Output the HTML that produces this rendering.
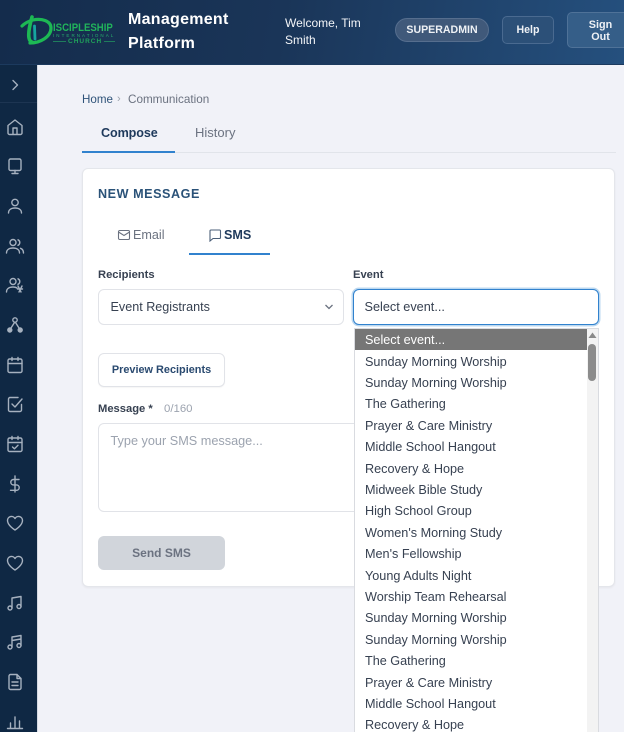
<!DOCTYPE html>
<html><head><meta charset="utf-8"><style>
*{box-sizing:border-box;margin:0;padding:0}
html,body{width:624px;height:732px;overflow:hidden}
body{position:relative;background:#f1f2f8;font-family:"Liberation Sans",sans-serif;color:#374151}
.a{position:absolute;white-space:nowrap}
#hd{left:0;top:0;width:624px;height:65px;background:linear-gradient(100deg,#142c4c 0%,#1a3558 45%,#25507e 100%);border-bottom:1px solid #1c3a5e}
#sb{left:0;top:65px;width:37px;height:667px;background:#0f2844;border-right:0}
#sbe{left:37px;top:65px;width:1px;height:667px;background:#d5dae3}
.ic{position:absolute;left:5px;width:20px;height:20px;fill:none;stroke:#a6b1bf;stroke-width:1.4;stroke-linecap:round;stroke-linejoin:round}
.o{left:365px;font-size:12.65px;color:#374151;line-height:21.4px;height:21.4px}
</style></head><body>
<div class="a" id="hd"></div>
<svg class="a" style="left:20px;top:15px;width:38px;height:32px" viewBox="0 0 38 32" fill="none" stroke-linecap="round"><path d="M2 11 C5 8 9 6 13 5 C22 3 31 6 31 13 C31 22 20 28 10 28" stroke="#1db954" stroke-width="3.2"/><path d="M12 2 C10 9 8 18 9 23 C9.500 26 11 27 13 27.500" stroke="#1db954" stroke-width="3.6"/><path d="M14.500 11 L15 24" stroke="#16a5a0" stroke-width="2.8"/></svg>
<div class="a" style="left:53px;top:22px;font-size:10.8px;font-weight:bold;color:#21b35b;transform:scaleX(.89);transform-origin:left">ISCIPLESHIP</div>
<div class="a" style="left:53px;top:32.500px;font-size:4.5px;color:#27ae6c;letter-spacing:2.05px">INTERNATIONAL</div>
<div class="a" style="left:53px;top:41px;width:62px;height:1px;background:#1f7d5c"></div>
<div class="a" style="left:66px;top:38px;font-size:6.5px;font-weight:bold;color:#1fa35c;letter-spacing:1px;background:#17304f;padding:0 2px">CHURCH</div>
<div class="a" style="left:128px;top:8px;font-size:16px;font-weight:bold;color:#fff;line-height:24px;letter-spacing:.28px">Management<br>Platform</div>
<div class="a" style="left:285px;top:15px;font-size:12px;color:#f3f5f8;line-height:17px">Welcome, Tim<br>Smith</div>
<div class="a" style="left:395px;top:18px;width:94px;height:24px;border-radius:12px;background:#40597a;border:1px solid #566e8e;color:#eef1f5;font-size:10.6px;font-weight:bold;text-align:center;line-height:23px">SUPERADMIN</div>
<div class="a" style="left:502px;top:16px;width:52px;height:28px;border-radius:5px;background:#2c5078;border:1px solid #4a6a90;color:#eef1f5;font-size:10.6px;font-weight:bold;text-align:center;line-height:27px">Help</div>
<div class="a" style="left:567px;top:12px;width:62px;height:36px;border-radius:5px;background:#355e88;border:1px solid #4f7298;color:#eef1f5;font-size:10.8px;font-weight:bold;text-align:center;line-height:12.5px;padding:5.500px 0 0 5px;white-space:normal">Sign<br>Out</div>

<div class="a" id="sb"><svg style="position:absolute;left:0;top:0;width:37px;height:667px" viewBox="0 0 37 667"><path d="M0 37.500H37" stroke="#1d3552"/></svg>
<svg class="ic" style="top:10px" viewBox="0 0 20 20"><path d="M8 5.500l4.500 4.500L8 14.500"/></svg>
<svg class="ic" style="top:52px" viewBox="0 0 20 20"><path d="M3 8.500L10 3l7 5.500V16a1.500 1.500 0 0 1-1.500 1.500h-11A1.500 1.500 0 0 1 3 16zM8 17.500V11h4v6.500"/></svg>
<svg class="ic" style="top:91px" viewBox="0 0 20 20"><rect x="4" y="3" width="12" height="11.500" rx="1.500"/><path d="M10 14.500V17M7 17.500h6"/></svg>
<svg class="ic" style="top:131px" viewBox="0 0 20 20"><circle cx="10" cy="6.500" r="3.200"/><path d="M3.500 17c0-3.500 3-5 6.500-5s6.500 1.500 6.500 5"/></svg>
<svg class="ic" style="top:171px" viewBox="0 0 20 20"><circle cx="8" cy="6.500" r="3"/><path d="M1.500 17c0-3.500 3-5 6.500-5s6.500 1.500 6.500 5M13 3.800a3 3 0 0 1 0 5.500M15.500 12.300c2 .7 3 2.500 3 4.700"/></svg>
<svg class="ic" style="top:210px" viewBox="0 0 20 20"><circle cx="8" cy="6.500" r="3"/><path d="M1.500 17c0-3.500 3-5 6.500-5 1.500 0 3 .3 4 1M13 3.800a3 3 0 0 1 0 5.500M13 11l3 6M17 11l-3 6M12.500 14h5"/></svg>
<svg class="ic" style="top:250px" viewBox="0 0 20 20"><circle cx="10" cy="5" r="2.200"/><circle cx="4.800" cy="15" r="2" fill="#a6b1bf"/><circle cx="15.200" cy="15" r="2" fill="#a6b1bf"/><path d="M9.500 7.500L6 13M10.500 7.500L14 13"/></svg>
<svg class="ic" style="top:290px" viewBox="0 0 20 20"><rect x="3" y="4" width="14" height="13.500" rx="1.500"/><path d="M3 8.500h14M7 2.500v3M13 2.500v3"/></svg>
<svg class="ic" style="top:329px" viewBox="0 0 20 20"><path d="M16.500 10.500V16a1.500 1.500 0 0 1-1.500 1.500H5A1.500 1.500 0 0 1 3.500 16V5A1.500 1.500 0 0 1 5 3.500h8M7 10l3 3 7-8"/></svg>
<svg class="ic" style="top:369px" viewBox="0 0 20 20"><rect x="3" y="4" width="14" height="13.500" rx="1.500"/><path d="M3 8.500h14M7 2.500v3M13 2.500v3M7.500 13l2 1.800 3.500-3.500"/></svg>
<svg class="ic" style="top:409px" viewBox="0 0 20 20"><path d="M10 2v16M14 5.500H8.500a2.700 2.700 0 0 0 0 5.400h3a2.700 2.700 0 0 1 0 5.400H5.500"/></svg>
<svg class="ic" style="top:448px" viewBox="0 0 20 20"><path d="M10 17S2.500 12.500 2.500 7.500A4 4 0 0 1 10 5.500 4 4 0 0 1 17.500 7.500C17.500 12.500 10 17 10 17z"/></svg>
<svg class="ic" style="top:488px" viewBox="0 0 20 20"><path d="M10 17S2.500 12.500 2.500 7.500A4 4 0 0 1 10 5.500 4 4 0 0 1 17.500 7.500C17.500 12.500 10 17 10 17z"/></svg>
<svg class="ic" style="top:528px" viewBox="0 0 20 20"><path d="M7 15V5l9-1.500V13.500"/><circle cx="5" cy="15" r="2"/><circle cx="14" cy="13.500" r="2"/></svg>
<svg class="ic" style="top:567px" viewBox="0 0 20 20"><path d="M7 15V5l9-1.500V13.500M7 8.500l9-1.500"/><circle cx="5" cy="15" r="2"/><circle cx="14" cy="13.500" r="2"/></svg>
<svg class="ic" style="top:607px" viewBox="0 0 20 20"><path d="M5.500 2.500H12l4 4V16a1.500 1.500 0 0 1-1.500 1.500h-9A1.500 1.500 0 0 1 4 16V4a1.500 1.500 0 0 1 1.500-1.500zM12 2.500v4h4M7 10h6M7 13.500h6"/></svg>
<svg class="ic" style="top:646px" viewBox="0 0 20 20"><path d="M2.500 17.500h15M5.500 17v-5M10 17V6M14.500 17v-7"/></svg>
</div>
<div class="a" id="sbe"></div>

<div class="a" style="left:82px;top:93px;font-size:11.6px;color:#2f5379">Home</div>
<div class="a" style="left:117px;top:93px;font-size:11px;color:#9aa1ac">›</div>
<div class="a" style="left:128px;top:93px;font-size:11.7px;color:#6b7280">Communication</div>
<div class="a" style="left:82px;top:152px;width:534px;height:1px;background:#e1e4ea"></div>
<div class="a" style="left:82px;top:151px;width:93px;height:2px;background:#3182ce"></div>
<div class="a" style="left:101px;top:125.500px;font-size:12.6px;font-weight:bold;color:#1f3a5c;letter-spacing:-.1px">Compose</div>
<div class="a" style="left:195px;top:125px;font-size:13px;color:#6b7280">History</div>

<div class="a" style="left:82px;top:168px;width:533px;height:419px;background:#fff;border:1px solid #e4e6eb;border-radius:6px;box-shadow:0 1px 2px rgba(0,0,0,.05)"></div>
<div class="a" style="left:98px;top:187px;font-size:12.6px;font-weight:bold;color:#2a5278;letter-spacing:.55px">NEW MESSAGE</div>
<svg class="a" style="left:117px;top:228px;width:14px;height:14px" viewBox="0 0 14 14" fill="none" stroke="#6b7280" stroke-width="1.100"><rect x="1.500" y="2.500" width="11" height="9" rx="1.200"/><path d="M1.500 4l5.500 3.500L12.500 4"/></svg>
<div class="a" style="left:133px;top:228px;font-size:12.6px;color:#6b7280">Email</div>
<svg class="a" style="left:208px;top:228px;width:14px;height:14px" viewBox="0 0 14 14" fill="none" stroke="#4b5f78" stroke-width="1.100"><path d="M2 3a1 1 0 0 1 1-1h8.500a1 1 0 0 1 1 1v6.500a1 1 0 0 1-1 1H5l-3 2.500z"/></svg>
<div class="a" style="left:224px;top:228px;font-size:12.6px;font-weight:bold;color:#1f3a5c">SMS</div>
<div class="a" style="left:189px;top:253px;width:81px;height:2px;background:#3182ce"></div>

<div class="a" style="left:98px;top:269px;font-size:11.2px;font-weight:bold;color:#374151">Recipients</div>
<div class="a" style="left:98px;top:289px;width:246px;height:36px;border:1px solid #e1e3e8;border-radius:6px;background:#fff;font-size:12.6px;line-height:34px;padding-left:11.500px">Event Registrants</div>
<svg class="a" style="left:324px;top:303px;width:10px;height:8px" viewBox="0 0 10 8" fill="none" stroke="#6b7280" stroke-width="1.300"><path d="M1.500 2l3.500 3.500L8.500 2"/></svg>
<div class="a" style="left:353px;top:269px;font-size:11.2px;font-weight:bold;color:#374151">Event</div>
<div class="a" style="left:353px;top:289px;width:246px;height:36px;border:1.500px solid #3182ce;box-shadow:0 0 0 1.500px #bcd8f0;border-radius:6px;background:#fff;font-size:12.7px;line-height:34px;padding-left:10.500px">Select event...</div>

<div class="a" style="left:98px;top:353px;width:127px;height:34px;border:1px solid #e1e3e8;border-radius:6px;background:#fff;box-shadow:0 1px 1px rgba(0,0,0,.04);font-size:10.9px;font-weight:bold;line-height:33px;text-align:center;color:#2a4a70">Preview Recipients</div>
<div class="a" style="left:98px;top:402.500px;font-size:11.2px;font-weight:bold;color:#374151">Message *</div>
<div class="a" style="left:164px;top:402.500px;font-size:11.4px;color:#9ca3af">0/160</div>
<div class="a" style="left:98px;top:423px;width:300px;height:89px;border:1px solid #e1e3e8;border-radius:6px;background:#fff;font-size:12.7px;color:#9ca3af;padding:10px 11.500px">Type your SMS message...</div>
<div class="a" style="left:98px;top:536px;width:127px;height:34px;border-radius:6px;background:#d1d5db;font-size:12px;font-weight:bold;line-height:34px;text-align:center;color:#6b7280">Send SMS</div>

<div class="a" style="left:354px;top:328px;width:245px;height:404px;background:#fff;border:1px solid #d9dbe0;border-bottom:0;overflow:hidden"></div>
<div class="a" style="left:355px;top:329px;width:232px;height:21px;background:#767676"></div>
<div class="a" style="left:587px;top:329px;width:11px;height:403px;background:#f3f3f3"></div>
<svg class="a" style="left:587px;top:331px;width:11px;height:9px" viewBox="0 0 11 9"><path d="M5.500 1.500L9.500 7H1.500z" fill="#8a8a8a"/></svg>
<div class="a" style="left:588px;top:344px;width:8px;height:37px;border-radius:4px;background:#8c8c8c"></div>
<div class="a o" style="top:330px;color:#fff">Select event...</div>
<div class="a o" style="top:351.600px">Sunday Morning Worship</div>
<div class="a o" style="top:373px">Sunday Morning Worship</div>
<div class="a o" style="top:394.400px">The Gathering</div>
<div class="a o" style="top:415.800px">Prayer &amp; Care Ministry</div>
<div class="a o" style="top:437.200px">Middle School Hangout</div>
<div class="a o" style="top:458.600px">Recovery &amp; Hope</div>
<div class="a o" style="top:480px">Midweek Bible Study</div>
<div class="a o" style="top:501.400px">High School Group</div>
<div class="a o" style="top:522.800px">Women's Morning Study</div>
<div class="a o" style="top:544.200px">Men's Fellowship</div>
<div class="a o" style="top:565.600px">Young Adults Night</div>
<div class="a o" style="top:587px">Worship Team Rehearsal</div>
<div class="a o" style="top:608.400px">Sunday Morning Worship</div>
<div class="a o" style="top:629.800px">Sunday Morning Worship</div>
<div class="a o" style="top:651.200px">The Gathering</div>
<div class="a o" style="top:672.600px">Prayer &amp; Care Ministry</div>
<div class="a o" style="top:694px">Middle School Hangout</div>
<div class="a o" style="top:715.400px">Recovery &amp; Hope</div>
</body></html>
